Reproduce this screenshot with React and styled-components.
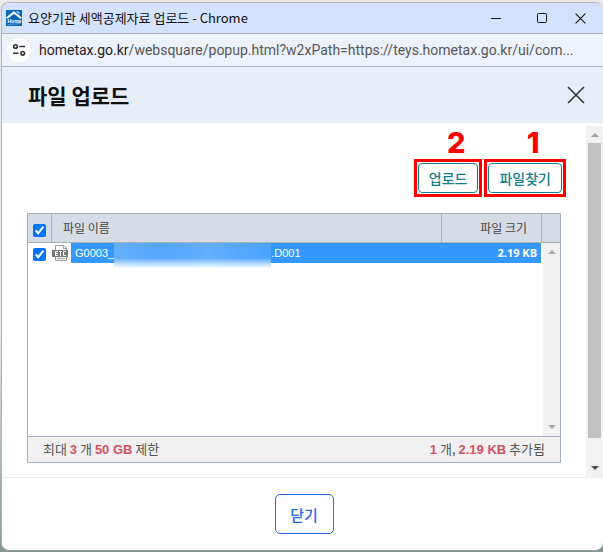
import React from "react";
import styled, { createGlobalStyle } from "styled-components";

const korean = `"Noto Sans CJK KR", sans-serif`;

const GlobalStyle = createGlobalStyle`
  *, *::before, *::after { box-sizing: border-box; }
  body { margin: 0; background: #e9e9e9; font-family: ${korean}; }
  button, input { font-family: inherit; margin: 0; }
`;

const Desktop = styled.div`
  display: flex;
  min-height: 100vh;
  padding: 2px 0 0 1px;
  background: linear-gradient(#e9e9e9 60%, #7f9693);
`;

const Window = styled.div`
  flex: 1;
  min-width: 0;
  display: flex;
  flex-direction: column;
  margin-bottom: 1px;
  border: 1px solid #b3b3b3;
  border-right: 0;
  border-bottom-color: #969c9c;
  border-radius: 8px;
  overflow: hidden;
  background: #fff;
`;

const TitleBar = styled.header`
  display: flex;
  align-items: center;
  height: 31px;
  padding: 0 8px 0 4px;
  background: #d3e2fd;
  border-bottom: 1px solid #b3b3b3;
`;

const WindowTitle = styled.span`
  flex: 1;
  margin-left: 6px;
  font-size: 13px;
  line-height: 20px;
  white-space: nowrap;
  color: #111;
`;

const WindowControls = styled.div`
  display: flex;
`;

const IconButton = styled.button`
  display: grid;
  place-items: center;
  width: ${(p) => p.$width}px;
  height: 30px;
  padding: 0;
  border: 0;
  background: none;
  color: ${(p) => p.$color || "#111"};
`;

const AddressBar = styled.div`
  display: flex;
  align-items: center;
  height: 33px;
  padding: 0 24px 0 5px;
  background: #edf1fa;
  border-bottom: 1px solid #b3b3b3;
`;

const SiteInfoButton = styled.button`
  display: grid;
  place-items: center;
  flex: none;
  width: 24px;
  height: 24px;
  padding: 0;
  border: 0;
  border-radius: 50%;
  background: #fff;
`;

const Address = styled.span`
  min-width: 0;
  margin-left: 8px;
  font-family: Roboto, sans-serif;
  font-size: 14px;
  line-height: 20px;
  white-space: nowrap;
  color: #555759;
`;

const Host = styled.span`
  color: #1f2023;
`;

const PageHeader = styled.div`
  display: flex;
  align-items: center;
  justify-content: space-between;
  height: 56px;
  padding: 0 12px 0 26px;
  background: #e8eef8;
`;

const PageTitle = styled.h1`
  margin: 0;
  font-size: 21px;
  font-weight: 700;
  line-height: 30px;
  color: #111;
`;

const Content = styled.main`
  flex: 1;
  display: flex;
  padding-top: 3px;
`;

const Panel = styled.section`
  flex: 1;
  min-width: 0;
  display: flex;
  flex-direction: column;
  padding: 0 25px 14px;
`;

const Actions = styled.div`
  display: flex;
  justify-content: flex-end;
  gap: 2px;
  margin: 0 -5px 16px 0;
`;

const Callout = styled.div`
  display: flex;
  flex-direction: column;
  align-items: center;
`;

const CalloutNumber = styled.span`
  padding-left: 16px;
  font-family: Inter, sans-serif;
  font-size: 29px;
  font-weight: 800;
  line-height: 33px;
  color: #f00;
`;

const CalloutFrame = styled.div`
  padding: 1px;
  border: 3px solid #f00;
`;

const ActionButton = styled.button`
  display: block;
  height: 30px;
  padding: 0 10px;
  border: 1px solid #12808c;
  border-radius: 4px;
  background: #fff;
  font-size: 14px;
  font-weight: 500;
  line-height: 20px;
  white-space: nowrap;
  color: #12808c;
`;

const FileBox = styled.div`
  flex: 1;
  display: flex;
  flex-direction: column;
  border: 1px solid #a5b0be;
  font-size: 12px;
  line-height: 18px;
`;

const ListArea = styled.div`
  flex: 1;
  position: relative;
  display: flex;
  flex-direction: column;
`;

const FileTable = styled.table`
  width: 100%;
  table-layout: fixed;
  border-collapse: separate;
  border-spacing: 0;
`;

const HeadCell = styled.th`
  width: ${(p) => p.$width || "auto"};
  height: 29px;
  padding: ${(p) => p.$padding || "0"};
  border-bottom: 1px solid #a5b0be;
  border-left: ${(p) => (p.$divided ? "1px solid #a5b0be" : "0")};
  background: #d5dce6;
  font-weight: 400;
  text-align: ${(p) => p.$align || "left"};
  color: #444;
`;

const Cell = styled.td`
  height: 20px;
  padding: 0;
`;

const Checkbox = styled.input`
  display: block;
  width: 13px;
  height: 13px;
  margin-left: 5px;
  margin-top: ${(p) => (p.$lowered ? "4px" : "2px")};
  accent-color: #0075ff;
`;

const FileEntry = styled.div`
  display: flex;
  align-items: center;
  height: 20px;
  padding-left: 1px;
`;

const FileName = styled.div`
  flex: 1;
  display: flex;
  align-items: center;
  height: 20px;
  margin-left: 2px;
  padding-left: 4px;
  background: #3399ff;
  font-family: "Liberation Sans", sans-serif;
  font-size: 11px;
  color: #fff;
`;

const Redaction = styled.span`
  align-self: flex-start;
  flex: none;
  width: 157px;
  height: 25px;
  background:
    linear-gradient(transparent 60%, #cfe6ff 88%, #f4f9ff),
    linear-gradient(90deg, #65b0ff, #55a6ff 30%, #62aeff 60%, #49a2ff);
`;

const SizeCell = styled.td`
  height: 20px;
  padding: 0 4px 0 0;
  background: #3399ff;
  font-family: "Noto Sans", sans-serif;
  font-size: 11px;
  font-weight: 700;
  text-align: right;
  color: #fff;
`;

const ListScrollbar = styled.div`
  position: absolute;
  top: 29px;
  right: 0;
  bottom: 0;
  display: flex;
  flex-direction: column;
  justify-content: space-between;
  align-items: center;
  width: 17px;
  padding: 7px 0;
  background: #f0f0f0;
`;

const Summary = styled.div`
  display: flex;
  justify-content: space-between;
  align-items: center;
  height: 26px;
  padding: 0 15px;
  border-top: 1px solid #a5b0be;
  background: #f0f0f0;
  font-size: 13px;
  color: #555;
`;

const Amount = styled.strong`
  font-family: "Liberation Sans", sans-serif;
  color: #d05264;
`;

const PageScrollbar = styled.div`
  display: flex;
  flex-direction: column;
  align-items: center;
  width: 17px;
  padding: 7px 2px;
  background: #f1f1f1;
`;

const Thumb = styled.div`
  flex: 1;
  width: 13px;
  margin: 6px 0 28px;
  background: #c1c1c1;
`;

const Footer = styled.footer`
  display: flex;
  justify-content: center;
  padding: 16px 0;
  border-top: 1px solid #e8edf8;
`;

const CloseButton = styled.button`
  width: 59px;
  height: 40px;
  padding: 0;
  margin-left: 3px;
  border: 1px solid #2469e8;
  border-radius: 5px;
  background: #fff;
  font-size: 15px;
  font-weight: 500;
  color: #2469e8;
`;

const Cross = ({ size, stroke }) => (
  <svg width={size} height={size} viewBox="0 0 18 18" fill="none" stroke="currentColor" strokeWidth={stroke}>
    <path d="M1 1 17 17M17 1 1 17" />
  </svg>
);

const Arrow = ({ down, color = "#a3a3a3" }) => (
  <svg width="8" height="4" viewBox="0 0 8 4" fill={color}>
    <path d={down ? "M0 0H8L4 4Z" : "M0 4H8L4 0Z"} />
  </svg>
);

const HomeLogo = () => (
  <svg width="16" height="16" viewBox="0 0 16 16">
    <rect width="16" height="16" fill="#0868b8" />
    <path d="M0 7.600C3 5 5.500 3 8 1.300C10.500 3 13 5.500 16 7.500L14.500 9C12 7 10 5.200 8 4C6 5.200 4 7 1.500 8.800Z" fill="#fff" />
    <path d="M10 1.200 13.500 4.500V2.500L12 1.200Z" fill="#c5dff5" />
    <text x="1.500" y="13" fill="#fff" fontFamily="Liberation Sans, sans-serif" fontSize="5" fontWeight="700">Home</text>
    <path d="M1.500 15C5 13.500 10 14.500 14.500 13.500" fill="none" stroke="#8ec5ee" strokeWidth=".6" />
  </svg>
);

const TuneIcon = () => (
  <svg width="14" height="14" viewBox="0 0 14 14" fill="none" stroke="#303238" strokeWidth="1.600">
    <circle cx="3.500" cy="3.500" r="1.800" />
    <path d="M7.300 3.500H13M1 10.300H6.500" />
    <circle cx="10.700" cy="10.300" r="1.800" />
  </svg>
);

const EtcFileIcon = () => (
  <svg width="17" height="16" viewBox="0 0 17 16">
    <path d="M3.500 6V.5H11.500L14.500 3.500V15.500H3.500V12" fill="#fff" stroke="#999" />
    <path d="M11.500 1V3.500H14M5 13.500H13" fill="none" stroke="#999" />
    <rect y="5" width="16" height="7" fill="#737373" />
    <g fill="none" stroke="#fff">
      <path d="M6 6.500H3.500V10.500H6M3.500 8.500H6" />
      <path d="M7 6.500H10M8.500 6.500V11" />
      <path d="M14 6.500H11.500V10.500H14" />
    </g>
  </svg>
);

export default function App() {
  return (
    <>
      <GlobalStyle />
      <Desktop>
        <Window>
          <TitleBar>
            <HomeLogo />
            <WindowTitle>요양기관 세액공제자료 업로드 - Chrome</WindowTitle>
            <WindowControls>
              <IconButton $width={46} aria-label="최소화">
                <svg width="10" height="10" viewBox="0 0 10 10" stroke="currentColor">
                  <path d="M0 5.500H10" />
                </svg>
              </IconButton>
              <IconButton $width={46} aria-label="최대화">
                <svg width="10" height="10" viewBox="0 0 10 10" fill="none" stroke="currentColor">
                  <rect x=".5" y=".5" width="9" height="9" rx="1" />
                </svg>
              </IconButton>
              <IconButton $width={30} aria-label="창 닫기">
                <Cross size={11} stroke={1.8} />
              </IconButton>
            </WindowControls>
          </TitleBar>
          <AddressBar>
            <SiteInfoButton aria-label="사이트 정보">
              <TuneIcon />
            </SiteInfoButton>
            <Address>
              <Host>hometax.go.kr</Host>/websquare/popup.html?w2xPath=https://teys.hometax.go.kr/ui/com...
            </Address>
          </AddressBar>
          <PageHeader>
            <PageTitle>파일 업로드</PageTitle>
            <IconButton $width={30} $color="#333" aria-label="팝업 닫기">
              <Cross size={18} stroke={1.6} />
            </IconButton>
          </PageHeader>
          <Content>
            <Panel>
              <Actions>
                <Callout>
                  <CalloutNumber>2</CalloutNumber>
                  <CalloutFrame>
                    <ActionButton>업로드</ActionButton>
                  </CalloutFrame>
                </Callout>
                <Callout>
                  <CalloutNumber>1</CalloutNumber>
                  <CalloutFrame>
                    <ActionButton>파일찾기</ActionButton>
                  </CalloutFrame>
                </Callout>
              </Actions>
              <FileBox>
                <ListArea>
                  <FileTable>
                    <thead>
                      <tr>
                        <HeadCell $width="23px">
                          <Checkbox $lowered type="checkbox" defaultChecked aria-label="모든 파일 선택" />
                        </HeadCell>
                        <HeadCell $divided $padding="0 0 0 11px">파일 이름</HeadCell>
                        <HeadCell $divided $width="100px" $align="right" $padding="0 14px 0 0">파일 크기</HeadCell>
                        <HeadCell $divided $width="19px" aria-hidden="true" />
                      </tr>
                    </thead>
                    <tbody>
                      <tr>
                        <Cell>
                          <Checkbox type="checkbox" defaultChecked aria-label="파일 선택" />
                        </Cell>
                        <Cell>
                          <FileEntry>
                            <EtcFileIcon />
                            <FileName>
                              G0003_
                              <Redaction />
                              .D001
                            </FileName>
                          </FileEntry>
                        </Cell>
                        <SizeCell>2.19 KB</SizeCell>
                        <Cell />
                      </tr>
                    </tbody>
                  </FileTable>
                  <ListScrollbar>
                    <Arrow />
                    <Arrow down />
                  </ListScrollbar>
                </ListArea>
                <Summary>
                  <span>최대 <Amount>3</Amount> 개 <Amount>50 GB</Amount> 제한</span>
                  <span><Amount>1</Amount> 개, <Amount>2.19 KB</Amount> 추가됨</span>
                </Summary>
              </FileBox>
            </Panel>
            <PageScrollbar>
              <Arrow />
              <Thumb />
              <Arrow down color="#505050" />
            </PageScrollbar>
          </Content>
          <Footer>
            <CloseButton>닫기</CloseButton>
          </Footer>
        </Window>
      </Desktop>
    </>
  );
}
